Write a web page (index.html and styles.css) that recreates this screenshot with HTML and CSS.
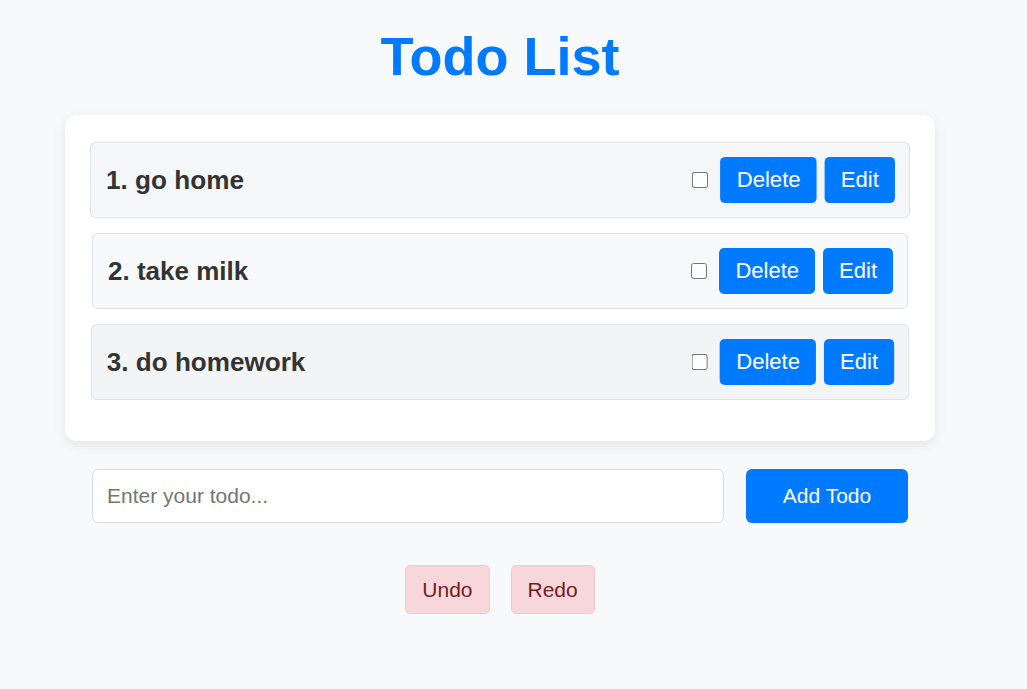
FILE: index.html
```html
<!DOCTYPE html>
<html>
<head>
<meta charset="utf-8">
<link rel="stylesheet" href="styles.css">
</head>
<body>
<div class="app">
  <h1 class="title">Todo List</h1>
  <div class="card">
    <ul class="todo-list">
      <li class="todo-item item-hover">
        <span class="todo-text">1. go home</span>
        <div class="actions">
          <input type="checkbox" class="check">
          <button class="btn-blue">Delete</button>
          <button class="btn-blue">Edit</button>
        </div>
      </li>
      <li class="todo-item">
        <span class="todo-text">2. take milk</span>
        <div class="actions">
          <input type="checkbox" class="check">
          <button class="btn-blue">Delete</button>
          <button class="btn-blue">Edit</button>
        </div>
      </li>
      <li class="todo-item item-dark">
        <span class="todo-text">3. do homework</span>
        <div class="actions">
          <input type="checkbox" class="check">
          <button class="btn-blue">Delete</button>
          <button class="btn-blue">Edit</button>
        </div>
      </li>
    </ul>
  </div>
  <div class="add-row">
    <input type="text" class="todo-input" placeholder="Enter your todo...">
    <button class="add-btn">Add Todo</button>
  </div>
  <div class="history">
    <button class="btn-soft">Undo</button>
    <button class="btn-soft">Redo</button>
  </div>
</div>
</body>
</html>
```
FILE: styles.css
```css
html, body {
  margin: 0;
  padding: 0;
  background: #f8f9fa;
  font-family: "Liberation Sans", Arial, sans-serif;
}
.app {
  width: 870px;
  margin-left: 65px;
  padding-top: 25px;
}
.title {
  margin: 0 0 28px;
  text-align: center;
  color: #007bff;
  font-size: 54px;
  font-weight: bold;
  line-height: 62px;
}
.card {
  background: #fff;
  border-radius: 12px;
  box-shadow: 0 4px 14px rgba(0, 0, 0, 0.09);
  padding: 27px 27px 26px;
}
.todo-list {
  list-style: none;
  margin: 0;
  padding: 0;
}
.todo-item {
  display: flex;
  align-items: center;
  justify-content: space-between;
  background: #f8f9fa;
  border: 1px solid #dee2e6;
  border-radius: 6px;
  padding: 14px 14px 14px 15px;
  margin-bottom: 15px;
}
.item-hover {
  transform: scale(1.005);
  background: #f5f6f7;
}
.item-dark {
  transform: scale(1.003);
  background: #f3f4f6;
}
.todo-text {
  font-size: 26px;
  font-weight: bold;
  color: #333;
}
.actions {
  display: flex;
  align-items: center;
  gap: 8px;
}
.check {
  width: 16px;
  height: 16px;
  margin: 0 4px 0 0;
}
.btn-blue {
  background: #007bff;
  color: #fff;
  border: none;
  border-radius: 5px;
  font-family: "Liberation Sans", Arial, sans-serif;
  font-size: 22px;
  line-height: 26px;
  padding: 10px 16px;
}
.add-row {
  display: flex;
  gap: 22px;
  padding: 28px 27px 0;
}
.todo-input {
  flex: 1;
  height: 54px;
  box-sizing: border-box;
  border: 1px solid #dcdcdc;
  border-radius: 6px;
  padding: 0 14px;
  font-family: "Liberation Sans", Arial, sans-serif;
  font-size: 21px;
  color: #333;
  background: #fff;
}
.todo-input::placeholder {
  color: #757575;
}
.add-btn {
  width: 162px;
  height: 54px;
  background: #007bff;
  color: #fff;
  border: none;
  border-radius: 6px;
  font-family: "Liberation Sans", Arial, sans-serif;
  font-size: 21px;
}
.history {
  display: flex;
  justify-content: center;
  gap: 21px;
  padding-top: 42px;
}
.btn-soft {
  background: #f8d7da;
  color: #721c24;
  border: 1px solid #f5c6cb;
  border-radius: 5px;
  font-family: "Liberation Sans", Arial, sans-serif;
  font-size: 21px;
  height: 49px;
  padding: 0 16px;
}
```
